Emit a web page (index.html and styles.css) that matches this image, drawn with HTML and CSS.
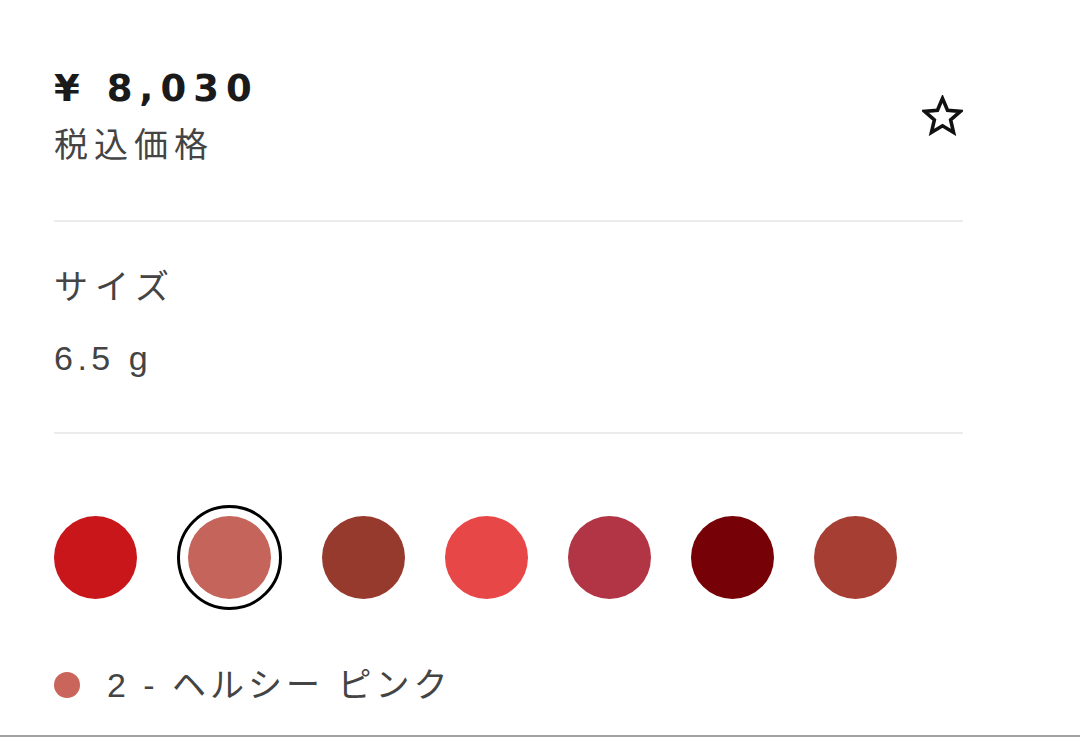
FILE: index.html
```html
<!DOCTYPE html>
<html lang="ja">
<head>
<meta charset="utf-8">
<title>商品詳細</title>
<link rel="stylesheet" href="styles.css">
</head>
<body>
<div class="page">
  <section class="price-section">
    <div class="price-block">
      <div class="price">¥ 8,030</div>
      <div class="price-note">税込価格</div>
    </div>
    <button class="fav" aria-label="お気に入り">
      <svg viewBox="0 0 24 24" width="41" height="41">
        <polygon points="12,2 14.94,8.95 22.46,9.6 16.76,14.55 18.47,21.9 12,18 5.53,21.9 7.24,14.55 1.54,9.6 9.06,8.95" fill="none" stroke="#111" stroke-width="2.1" stroke-linejoin="miter"/>
      </svg>
    </button>
  </section>
  <section class="size-section">
    <div class="label">サイズ</div>
    <div class="size-value">6.5 g</div>
  </section>
  <section class="shade-section">
    <div class="swatches">
      <span class="swatch" style="background:#c8161a"></span>
      <span class="swatch-ring"><span class="swatch" style="background:#c5645a"></span></span>
      <span class="swatch" style="background:#973a2e"></span>
      <span class="swatch" style="background:#e84748"></span>
      <span class="swatch" style="background:#b23545"></span>
      <span class="swatch" style="background:#760207"></span>
      <span class="swatch" style="background:#a73e34"></span>
    </div>
    <div class="shade-name">
      <span class="dot" style="background:#c9655a"></span>
      <span class="shade-text">2 - ヘルシー ピンク</span>
    </div>
  </section>
</div>
</body>
</html>
```

FILE: styles.css
```css
html, body {
  margin: 0;
  padding: 0;
  background: #fff;
}

.page {
  box-sizing: border-box;
  height: 737px;
  padding: 0 117px 0 54px;
  border-bottom: 2px solid #a2a2a2;
  overflow: hidden;
  font-family: "Liberation Sans", "Noto Sans CJK JP", sans-serif;
  color: #444;
}

.price-section {
  display: flex;
  justify-content: space-between;
  align-items: center;
  padding: 66px 0 55px;
  border-bottom: 2px solid #ebebeb;
}

.price {
  font-family: "DejaVu Sans", sans-serif;
  font-weight: 700;
  font-size: 37px;
  line-height: 46px;
  letter-spacing: 7px;
  color: #1a1a1a;
}

.price-note {
  margin-top: 9px;
  font-family: "Noto Sans CJK JP", sans-serif;
  font-size: 34px;
  line-height: 44px;
  letter-spacing: 6px;
  color: #444;
}

.fav {
  margin: 0;
  padding: 0;
  border: 0;
  background: none;
  display: flex;
  cursor: pointer;
}

.size-section {
  padding: 41px 0 52px;
  border-bottom: 2px solid #ebebeb;
}

.label {
  font-family: "Noto Sans CJK JP", sans-serif;
  font-size: 34px;
  line-height: 44px;
  letter-spacing: 7px;
  color: #444;
}

.size-value {
  margin-top: 29px;
  font-size: 34px;
  line-height: 44px;
  letter-spacing: 4.5px;
  color: #444;
}

.shade-section {
  padding-top: 71px;
}

.swatches {
  display: flex;
  align-items: center;
  gap: 40px;
}

.swatch {
  display: block;
  width: 83px;
  height: 83px;
  border-radius: 50%;
  flex: none;
}

.swatch-ring {
  display: block;
  padding: 8px;
  border: 3px solid #000;
  border-radius: 50%;
  flex: none;
}

.shade-name {
  display: flex;
  align-items: center;
  gap: 27px;
  margin-top: 53px;
  height: 44px;
}

.dot {
  width: 26px;
  height: 26px;
  border-radius: 50%;
  flex: none;
}

.shade-text {
  font-size: 34px;
  line-height: 44px;
  letter-spacing: 4px;
  color: #444;
}
```
